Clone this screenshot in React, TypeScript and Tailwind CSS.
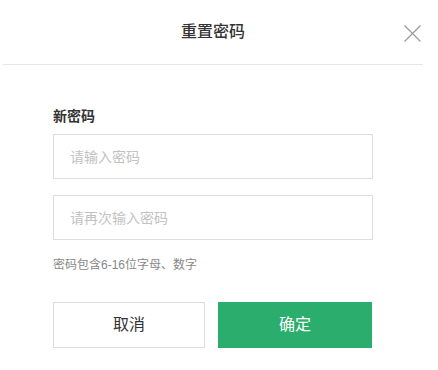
export default function App() {
  return (
    <div className="h-[370px] w-[438px] bg-white font-['Liberation_Sans','Noto_Sans_CJK_SC',sans-serif] text-[#333]">
      <div className="relative mx-[3px] flex h-[65px] w-[420px] items-center justify-center border-b border-[#e5e5e5]">
        <h2 className="text-[16px] font-medium leading-none text-[#333]">重置密码</h2>
        <button
          type="button"
          aria-label="Close"
          className="absolute right-[2px] top-[25px] text-[#9a9a9a]"
        >
          <svg width="17" height="17" viewBox="0 0 17 17" fill="none" stroke="currentColor" strokeWidth="1.2">
            <path d="M0.5 0.5 L16.5 16.5 M16.5 0.5 L0.5 16.5" />
          </svg>
        </button>
      </div>

      <div className="ml-[53px] w-[320px] pt-[41px]">
        <label className="block text-[14px] font-bold leading-[20px] text-[#333]">新密码</label>
        <input
          type="password"
          placeholder="请输入密码"
          className="mt-[8px] block h-[45px] w-full border border-[#dddddd] px-[16px] text-[14px] outline-none placeholder:text-[#c2c2c2]"
        />
        <input
          type="password"
          placeholder="请再次输入密码"
          className="mt-[16px] block h-[45px] w-full border border-[#dddddd] px-[16px] text-[14px] outline-none placeholder:text-[#c2c2c2]"
        />
        <p className="mt-[17px] text-[12px] leading-[16px] text-[#888]">密码包含6-16位字母、数字</p>

        <div className="mt-[29px] flex gap-[13px]">
          <button
            type="button"
            className="h-[46px] w-[152px] border border-[#dddddd] bg-white text-[16px] text-[#333]"
          >
            取消
          </button>
          <button
            type="button"
            className="h-[46px] w-[154px] bg-[#2bad6e] text-[16px] text-white"
          >
            确定
          </button>
        </div>
      </div>
    </div>
  );
}
